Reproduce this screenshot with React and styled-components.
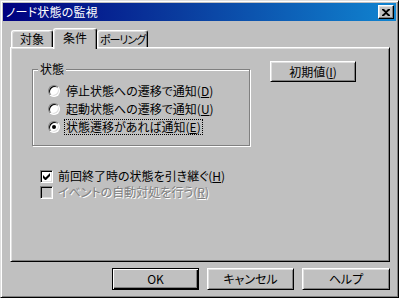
import React from 'react';
import styled, { createGlobalStyle } from 'styled-components';

const GlobalStyle = createGlobalStyle`
  html, body {
    margin: 0;
    padding: 0;
    background: #c0c0c0;
  }
  * {
    box-sizing: border-box;
  }
`;

const Window = styled.div`
  width: 399px;
  height: 298px;
  display: flex;
  flex-direction: column;
  background: #c0c0c0;
  border-top: 1px solid #dfdfdf;
  border-left: 1px solid #dfdfdf;
  border-right: 1px solid #000;
  border-bottom: 1px solid #000;
  box-shadow: inset 1px 1px 0 #fff, inset -1px -1px 0 #808080;
  padding: 2px;
  font-family: "Noto Sans CJK JP", "Liberation Sans", sans-serif;
  font-size: 12px;
  font-feature-settings: "palt" 1;
  color: #000;
`;

const TitleBar = styled.div`
  height: 18px;
  display: flex;
  align-items: center;
  justify-content: space-between;
  padding: 0 2px 0 3px;
  background: linear-gradient(to right, #000080 0%, #0a3c9e 45%, #1084d0 100%);
  color: #fff;
`;

const TitleText = styled.span`
  font-size: 12px;
  line-height: 18px;
  letter-spacing: 0.2px;
`;

const CloseButton = styled.div`
  width: 16px;
  height: 14px;
  display: flex;
  align-items: center;
  justify-content: center;
  background: #c0c0c0;
  border-top: 1px solid #fff;
  border-left: 1px solid #fff;
  border-right: 1px solid #000;
  border-bottom: 1px solid #000;
  box-shadow: inset -1px -1px 0 #808080, inset 1px 1px 0 #dfdfdf;
`;

const Body = styled.div`
  flex: 1;
  display: flex;
  flex-direction: column;
  padding: 7px 6px 0 7px;
`;

const TabRow = styled.div`
  display: flex;
  align-items: flex-end;
  padding-left: 1px;
  height: 21px;
  margin-bottom: -2px;
`;

const Tab = styled.div`
  position: relative;
  z-index: ${p => (p.$active ? 2 : 0)};
  width: ${p => p.$w}px;
  height: ${p => (p.$active ? 21 : 19)}px;
  display: flex;
  justify-content: center;
  padding-top: ${p => (p.$active ? 2 : 1)}px;
  background: #c0c0c0;
  border-top: 1px solid #fff;
  border-left: 1px solid #fff;
  border-right: 1px solid #000;
  border-top-left-radius: 3px;
  border-top-right-radius: 3px;
  box-shadow: inset -1px 0 0 #808080, inset 1px 1px 0 #dfdfdf;
  line-height: 14px;
  white-space: nowrap;
  font-size: ${p => (p.$tight ? '11px' : '12px')};
  letter-spacing: ${p => (p.$tight ? '-1px' : '0')};
`;

const Panel = styled.div`
  position: relative;
  z-index: 1;
  width: 380px;
  height: 215px;
  display: flex;
  flex-direction: column;
  padding: 13px 0 0 21px;
  border-top: 1px solid #fff;
  border-left: 1px solid #fff;
  border-right: 1px solid #000;
  border-bottom: 1px solid #000;
  box-shadow: inset 1px 1px 0 #dfdfdf, inset -1px -1px 0 #808080;
`;

const TopRow = styled.div`
  display: flex;
  align-items: flex-start;
  gap: 20px;
`;

const GroupBox = styled.div`
  position: relative;
  margin-top: 8px;
  width: 218px;
  height: 77px;
  display: flex;
  flex-direction: column;
  padding: 12px 0 0 15px;
  border: 1px solid #808080;
  box-shadow: 1px 1px 0 #fff, inset 1px 1px 0 #fff;
`;

const GroupLabel = styled.span`
  position: absolute;
  top: -8px;
  left: 5px;
  padding: 0 2px;
  background: #c0c0c0;
  line-height: 14px;
`;

const OptionRow = styled.div`
  height: 18px;
  display: flex;
  align-items: center;
  gap: 5px;
`;

const Radio = styled.div`
  position: relative;
  width: 12px;
  height: 12px;
  border-radius: 50%;
  background: #fff;
  border-top: 1px solid #808080;
  border-left: 1px solid #808080;
  border-right: 1px solid #fff;
  border-bottom: 1px solid #fff;
  box-shadow: inset 1px 1px 0 #000, inset -1px -1px 0 #dfdfdf;
  &::after {
    content: '';
    display: ${p => (p.$checked ? 'block' : 'none')};
    position: absolute;
    left: 3px;
    top: 3px;
    width: 4px;
    height: 4px;
    border-radius: 50%;
    background: #000;
  }
`;

const Label = styled.span`
  line-height: 14px;
  padding: 0 1px;
  outline: ${p => (p.$focus ? '1px dotted #000' : 'none')};
  color: ${p => (p.$disabled ? '#808080' : '#000')};
  text-shadow: ${p => (p.$disabled ? '1px 1px 0 #fff' : 'none')};
  white-space: nowrap;
`;

const Button = styled.div`
  width: ${p => p.$w}px;
  height: ${p => p.$h}px;
  display: flex;
  align-items: center;
  justify-content: center;
  background: #c0c0c0;
  border-top: 1px solid ${p => (p.$default ? '#000' : '#fff')};
  border-left: 1px solid ${p => (p.$default ? '#000' : '#fff')};
  border-right: 1px solid #000;
  border-bottom: 1px solid #000;
  box-shadow: ${p =>
    p.$default
      ? 'inset 1px 1px 0 #fff, inset -1px -1px 0 #000, inset -2px -2px 0 #808080'
      : 'inset 1px 1px 0 #dfdfdf, inset -1px -1px 0 #808080'};
  line-height: 14px;
  white-space: nowrap;
`;

const CheckList = styled.div`
  display: flex;
  flex-direction: column;
  margin: 22px 0 0 8px;
`;

const CheckRow = styled.div`
  height: 16px;
  display: flex;
  align-items: center;
  gap: 4px;
`;

const CheckBox = styled.div`
  width: 13px;
  height: 13px;
  display: flex;
  align-items: center;
  justify-content: center;
  background: ${p => (p.$disabled ? '#c0c0c0' : '#fff')};
  border-top: 1px solid #808080;
  border-left: 1px solid #808080;
  border-right: 1px solid #fff;
  border-bottom: 1px solid #fff;
  box-shadow: inset 1px 1px 0 #000, inset -1px -1px 0 #dfdfdf;
`;

const ButtonRow = styled.div`
  display: flex;
  justify-content: flex-end;
  gap: 8px;
  margin-top: 6px;
`;

const Key = ({ children }) => <u>{children}</u>;

export default function App() {
  return (
    <>
      <GlobalStyle />
      <Window>
        <TitleBar>
          <TitleText>ノード状態の監視</TitleText>
          <CloseButton>
            <svg width="8" height="7" viewBox="0 0 8 7">
              <path d="M0 0h2l2 2 2-2h2v1L5 3.5 8 6v1H6L4 5 2 7H0V6l3-2.5L0 1z" fill="#000" />
            </svg>
          </CloseButton>
        </TitleBar>
        <Body>
          <TabRow>
            <Tab $w={42}>対象</Tab>
            <Tab $w={44} $active>条件</Tab>
            <Tab $w={51} $tight>ポーリング</Tab>
          </TabRow>
          <Panel>
            <TopRow>
              <GroupBox>
                <GroupLabel>状態</GroupLabel>
                <OptionRow>
                  <Radio />
                  <Label>停止状態への遷移で通知(<Key>D</Key>)</Label>
                </OptionRow>
                <OptionRow>
                  <Radio />
                  <Label>起動状態への遷移で通知(<Key>U</Key>)</Label>
                </OptionRow>
                <OptionRow>
                  <Radio $checked />
                  <Label $focus>状態遷移があれば通知(<Key>E</Key>)</Label>
                </OptionRow>
              </GroupBox>
              <Button $w={86} $h={21}>初期値(<Key>I</Key>)</Button>
            </TopRow>
            <CheckList>
              <CheckRow>
                <CheckBox>
                  <svg width="7" height="7" viewBox="0 0 7 7">
                    <path d="M0 2v3l2 2h1l4-4V0L2.5 4.5z" fill="#000" />
                  </svg>
                </CheckBox>
                <Label>前回終了時の状態を引き継ぐ(<Key>H</Key>)</Label>
              </CheckRow>
              <CheckRow>
                <CheckBox $disabled />
                <Label $disabled>イベントの自動対処を行う(<Key>R</Key>)</Label>
              </CheckRow>
            </CheckList>
          </Panel>
          <ButtonRow>
            <Button $w={87} $h={22} $default>OK</Button>
            <Button $w={87} $h={22}>キャンセル</Button>
            <Button $w={88} $h={22}>ヘルプ</Button>
          </ButtonRow>
        </Body>
      </Window>
    </>
  );
}
